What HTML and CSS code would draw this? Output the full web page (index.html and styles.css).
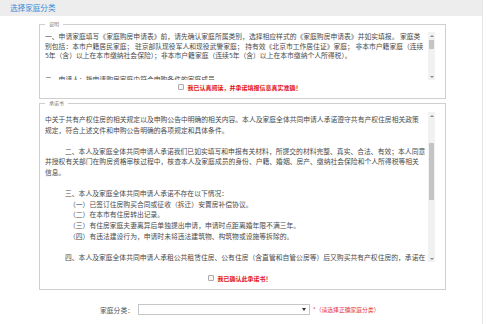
FILE: index.html
```html
<!DOCTYPE html>
<html lang="zh-CN">
<head>
<meta charset="utf-8">
<title>选择家庭分类</title>
<link rel="stylesheet" href="styles.css">
</head>
<body>
<div class="page">
  <div class="titlebar">选择家庭分类</div>
  <div class="main">
    <fieldset class="panel panel-intro">
      <legend>说明</legend>
      <div class="scrollbox box1">
        <div class="text">
          <p>一、申请家庭填写《家庭购房申请表》前，请先确认家庭所属类别，选择相应样式的《家庭购房申请表》并如实填报。 家庭类<br>别包括：本市户籍居民家庭； 驻京部队现役军人和现役武警家庭； 持有效《北京市工作居住证》家庭； 非本市户籍家庭（连续<br>5年（含）以上在本市缴纳社会保险）；非本市户籍家庭（连续5年（含）以上在本市缴纳个人所得税）。</p>
          <p>二、申请人：指申请购房家庭中符合申购条件的家庭成员。</p>
        </div>
        <div class="sbar">
          <div class="btn"><span class="tri up"></span></div>
          <div class="track"><div class="thumb thumb1"></div></div>
          <div class="btn"><span class="tri down"></span></div>
        </div>
      </div>
      <label class="confirm"><input type="checkbox"><span>我已认真阅读，并承诺填报信息真实准确！</span></label>
    </fieldset>

    <fieldset class="panel panel-promise">
      <legend>承诺书</legend>
      <div class="scrollbox box2">
        <div class="text text2">
          <p>中关于共有产权住房的相关规定以及申购公告中明确的相关内容。本人及家庭全体共同申请人承诺遵守共有产权住房相关政策<br>规定，符合上述文件和申购公告明确的各项规定和具体条件。</p>
          <p class="ind">二、本人及家庭全体共同申请人承诺我们已如实填写和申报有关材料，所提交的材料完整、真实、合法、有效；本人同意<br>并授权有关部门在购房资格审核过程中，核查本人及家庭成员的身份、户籍、婚姻、房产、缴纳社会保险和个人所得税等相关<br>信息。</p>
          <p class="ind lead">三、本人及家庭全体共同申请人承诺不存在以下情况：</p>
          <p class="sub">（一）已签订住房购买合同或征收（拆迁）安置房补偿协议。<br>（二）在本市有住房转出记录。<br>（三）有住房家庭夫妻离异后单独提出申请，申请时点距离婚年限不满三年。<br>（四）有违法建设行为，申请时未将违法建筑物、构筑物或设施等拆除的。</p>
          <p class="ind">四、本人及家庭全体共同申请人承租公共租赁住房、公有住房（含直管和自管公房等）后又购买共有产权住房的，承诺在</p>
        </div>
        <div class="sbar">
          <div class="btn"><span class="tri up"></span></div>
          <div class="track"><div class="thumb thumb2"></div></div>
          <div class="btn"><span class="tri down"></span></div>
        </div>
      </div>
      <label class="confirm confirm2"><input type="checkbox"><span>我已确认此承诺书！</span></label>
    </fieldset>

    <div class="selrow">
      <span class="sellabel">家庭分类：</span>
      <div class="select"><span class="selval"></span><span class="caret"></span></div>
      <span class="hint">*（请选择正确家庭分类）</span>
    </div>
  </div>
</div>
</body>
</html>
```

FILE: styles.css
```css
* { box-sizing: border-box; }
html, body { margin: 0; padding: 0; background: #fff; }
body {
  width: 486px;
  height: 324px;
  overflow: hidden;
  font-family: "Noto Sans CJK SC", "Noto Sans", sans-serif;
  color: #4a4a4a;
}
.page {
  width: 483px;
  height: 324px;
  border-right: 1px solid #e6e6e6;
}
.titlebar {
  height: 16px;
  background: #ededed;
  padding-left: 10px;
  font-size: 7.6px;
  line-height: 16px;
  color: #3b8ad8;
}
.main { padding: 4px 0 0 39px; }

.panel {
  width: 407px;
  min-width: 0;
  margin: 0;
  padding: 4px 10px 6px 5px;
  border: 1px solid #cfcfcf;
}
.panel legend {
  font-size: 5px;
  line-height: 8px;
  padding: 0 4px;
  color: #777;
}
.panel-promise { padding-top: 5px; }

.scrollbox { display: flex; }
.box1 { height: 48px; }
.box2 { height: 150px; }

.text {
  flex: 1;
  overflow: hidden;
  font-size: 6.8px;
  line-height: 9.5px;
  white-space: nowrap;
}
.text p { margin: 0 0 14.5px; }
.text2 { line-height: 10.6px; padding-top: 2px; }
.text2 p { margin: 0 0 10.6px; }
.text2 .ind { text-indent: 20px; }
.text2 .lead { margin-bottom: 0; }
.text2 .sub { padding-left: 24px; }

.sbar {
  width: 7px;
  display: flex;
  flex-direction: column;
  background: #f1f1f1;
}
.btn {
  height: 7px;
  display: flex;
  align-items: center;
  justify-content: center;
}
.tri { width: 0; height: 0; border-left: 2px solid transparent; border-right: 2px solid transparent; }
.tri.up { border-bottom: 2px solid #8a8a8a; }
.tri.down { border-top: 2px solid #8a8a8a; }
.track { flex: 1; padding: 0 1px; }
.thumb { background: #c4c4c4; }
.thumb1 { margin-top: 1px; height: 9px; }
.thumb2 { margin-top: 24px; height: 57px; }

.confirm {
  display: flex;
  align-items: center;
  justify-content: center;
  gap: 2px;
  height: 10px;
  margin-top: 2px;
  font-size: 6px;
  font-weight: bold;
  color: #e3141c;
}
.confirm2 { margin-top: 11px; }
.confirm input {
  appearance: none;
  -webkit-appearance: none;
  width: 6px;
  height: 6px;
  margin: 0 1px 0 0;
  border: 1px solid #ababab;
  border-radius: 1px;
  background: #f5f5f5;
}

.selrow {
  display: flex;
  align-items: center;
  height: 11px;
  margin-top: 14px;
  padding-left: 61px;
}
.sellabel {
  width: 38px;
  font-size: 6.8px;
  color: #555;
}
.select {
  width: 172px;
  height: 11px;
  border: 1px solid #c6c6c6;
  background: #fff;
  display: flex;
  align-items: center;
  justify-content: flex-end;
  padding-right: 3px;
}
.caret { width: 0; height: 0; border-left: 2px solid transparent; border-right: 2px solid transparent; border-top: 3px solid #333; }
.hint {
  margin-left: 3px;
  font-size: 5.8px;
  color: #e3343a;
}
```
